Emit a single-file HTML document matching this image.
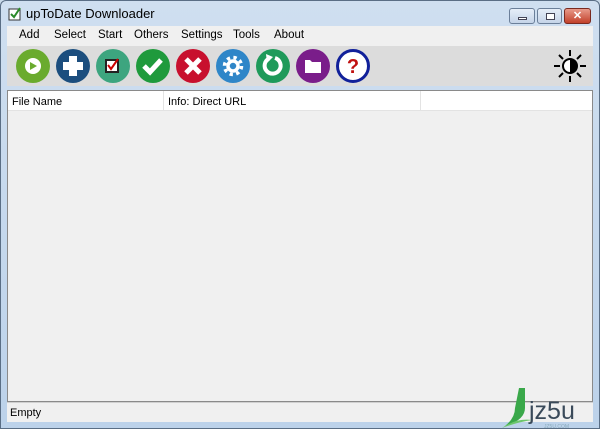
<!DOCTYPE html>
<html><head><meta charset="utf-8"><style>
*{margin:0;padding:0;box-sizing:border-box}
body{width:600px;height:429px;overflow:hidden;background:#c9daea;font-family:"Liberation Sans",sans-serif;font-size:11px;color:#000;position:relative}
.frame{position:absolute;left:0;top:0;width:600px;height:429px;background:linear-gradient(#cfdff0,#bcd2ea);border:1px solid #5a6e85;border-radius:6px 6px 0 0}
.title{position:absolute;left:26px;top:6px;font-size:13px;color:#000}
.menu{position:absolute;left:7px;top:26px;width:586px;height:20px;background:#f0f0f0}
.menu span{position:absolute;top:3px;font-size:11.5px}
.tb{position:absolute;left:7px;top:46px;width:586px;height:40px;background:#dcdcdc}
.list{position:absolute;left:7px;top:90px;width:586px;height:312px;background:#f0f0f0;border:1px solid #8a8a8a}
.hdr{position:absolute;left:0;top:0;width:584px;height:20px;background:#fff;border-bottom:1px solid #e3e3e3}
.hdr span{position:absolute;top:5px}
.status{position:absolute;left:7px;top:402px;width:586px;height:20px;background:#f0f0f0;border-top:1px solid #d0d0d0}
.btn{position:absolute;top:8px;height:16px;border:1px solid #6b7f99;border-radius:3px;background:linear-gradient(#e6eef8,#c5d4e8)}
</style></head><body>
<div class="frame"></div>
<svg style="position:absolute;left:8px;top:7px" width="14" height="14"><rect x="1" y="2" width="11" height="11" fill="#fff" stroke="#333"/><path d="M3 7l3 3 6-9" stroke="#2a8a2a" stroke-width="2" fill="none"/></svg>
<div class="title">upToDate Downloader</div>
<div class="btn" style="left:509px;width:26px"><div style="position:absolute;left:8px;top:8px;width:9px;height:3px;background:#fff;border:1px solid #445"></div></div>
<div class="btn" style="left:537px;width:25px"><div style="position:absolute;left:8px;top:4px;width:9px;height:7px;border:1px solid #445;background:#fff"></div></div>
<div class="btn" style="left:564px;width:27px;background:linear-gradient(#e89a8a,#c2402a);border-color:#7a2a20;color:#fff;font-weight:bold;text-align:center;line-height:14px;font-size:11px">✕</div>
<div class="menu">
<span style="left:12px">Add</span><span style="left:47px">Select</span><span style="left:91px">Start</span><span style="left:127px">Others</span><span style="left:174px">Settings</span><span style="left:226px">Tools</span><span style="left:267px">About</span>
</div>
<div class="tb"></div>
<svg style="position:absolute;left:0;top:46px" width="600" height="40">
<circle cx="33" cy="20" r="17" fill="#6aab2e"/><circle cx="33" cy="20" r="8" fill="#fff"/><path d="M30 16l7 4-7 4z" fill="#6aab2e"/>
<circle cx="73" cy="20" r="17" fill="#1c4e7e"/><path d="M69 10h8v6h6v8h-6v6h-8v-6h-6v-8h6z" fill="#fff"/>
<circle cx="113" cy="20" r="17" fill="#3da57f"/><rect x="106" y="14" width="12" height="12" fill="#fff" stroke="#222" stroke-width="2"/><path d="M108 19l3 4 7-10" stroke="#c00" stroke-width="2" fill="none"/>
<circle cx="153" cy="20" r="17" fill="#1f9a3c"/><path d="M144 20l6 6 11-12" stroke="#fff" stroke-width="5" fill="none"/>
<circle cx="193" cy="20" r="17" fill="#c8102e"/><path d="M186 13l14 14M200 13l-14 14" stroke="#fff" stroke-width="5"/>
<circle cx="233" cy="20" r="17" fill="#2f86c8"/><circle cx="233" cy="20" r="8.5" fill="none" stroke="#fff" stroke-width="3.5" stroke-dasharray="3.3 3.4"/><circle cx="233" cy="20" r="5" fill="none" stroke="#fff" stroke-width="3.5"/>
<circle cx="273" cy="20" r="17" fill="#1f9a5a"/><path d="M269 12.5a8 8 0 1 0 6 -0.5" stroke="#fff" stroke-width="4" fill="none"/><path d="M266 8l7 3-6 6z" fill="#fff"/>
<circle cx="313" cy="20" r="17" fill="#7a1d8a"/><path d="M305 14h5l2 2h9v11h-16z" fill="#fff"/>
<circle cx="353" cy="20" r="15.5" fill="#fff" stroke="#10209a" stroke-width="3"/><text x="353" y="27" text-anchor="middle" font-family="Liberation Sans" font-weight="bold" font-size="20" fill="#c01010">?</text>
<circle cx="570" cy="20" r="7" fill="#fff" stroke="#000" stroke-width="2"/><path d="M570 13a7 7 0 0 1 0 14z" fill="#000"/>
<path d="M570 4v6M570 30v6M554 20h6M580 20h6M559 9l4 4M577 27l4 4M581 9l-4 4M563 27l-4 4" stroke="#000" stroke-width="2"/>
</svg>
<div class="list"><div class="hdr"><span style="left:4px">File Name</span><span style="left:160px">Info: Direct URL</span>
<div style="position:absolute;left:155px;top:0;width:1px;height:20px;background:#e3e3e3"></div>
<div style="position:absolute;left:412px;top:0;width:1px;height:20px;background:#e3e3e3"></div></div></div>
<div class="status"><span style="position:absolute;left:3px;top:4px">Empty</span></div>
<svg style="position:absolute;left:500px;top:388px" width="100" height="41">
<path d="M19 0h6v20q0 12 -20 18q10 -8 10 -18z" fill="#3aa84a"/><path d="M2 40q14 -10 30 -8q-14 2 -30 8z" fill="#6cc66c"/>
<text x="29" y="31" font-family="Liberation Sans" font-size="25" fill="#3a4a5a">jz5u</text>
<text x="44" y="40" font-family="Liberation Sans" font-size="5" fill="#8ab">JZ5U.COM</text>
</svg>
</body></html>
